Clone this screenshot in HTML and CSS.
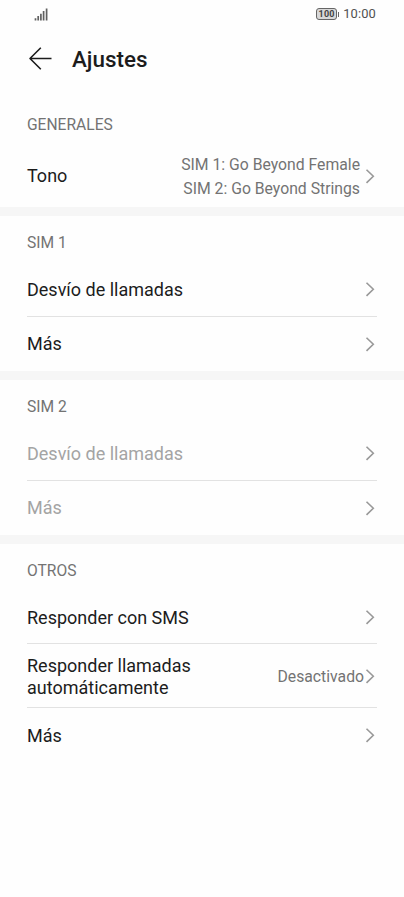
FILE: index.html
```html
<!DOCTYPE html>
<html lang="es">
<head>
<meta charset="utf-8">
<title>Ajustes</title>
<link rel="stylesheet" href="styles.css">
</head>
<body>
<div class="status">
  <svg class="signal" width="14" height="13" viewBox="0 0 14 13"><path d="M1.5 10.2V12.5M4.2 8V12.5M6.9 5.7V12.5M9.6 3V12.5M12.6 .5V12.5" stroke="#606060" stroke-width="1.7"/></svg>
  <div class="status-right"><span class="battery">100</span><span class="battery-tip"></span><span class="clock">10:00</span></div>
</div>
<header class="header">
  <svg width="24" height="24" viewBox="0 0 24 24" fill="none" stroke="#1c1c1c" stroke-width="1.6" stroke-linejoin="round"><path d="M23.5 11.5H2M12.8 .8L2 11.5L12.8 22.2"/></svg>
  <h1>Ajustes</h1>
</header>
<section class="group general">
  <h2>GENERALES</h2>
  <div class="row tone"><span class="label">Tono</span><span class="value">SIM 1: Go Beyond Female<br>SIM 2: Go Beyond Strings</span><svg class="chev" viewBox="0 0 10 16"><path d="M1.5 1.7L8.3 8.3L1.5 14.9"/></svg></div>
</section>
<section class="group">
  <h2>SIM 1</h2>
  <div class="row"><span class="label">Desvío de llamadas</span><svg class="chev" viewBox="0 0 10 16"><path d="M1.5 1.7L8.3 8.3L1.5 14.9"/></svg></div>
  <div class="row last"><span class="label">Más</span><svg class="chev" viewBox="0 0 10 16"><path d="M1.5 1.7L8.3 8.3L1.5 14.9"/></svg></div>
</section>
<section class="group disabled">
  <h2>SIM 2</h2>
  <div class="row"><span class="label">Desvío de llamadas</span><svg class="chev" viewBox="0 0 10 16"><path d="M1.5 1.7L8.3 8.3L1.5 14.9"/></svg></div>
  <div class="row last"><span class="label">Más</span><svg class="chev" viewBox="0 0 10 16"><path d="M1.5 1.7L8.3 8.3L1.5 14.9"/></svg></div>
</section>
<section class="group">
  <h2>OTROS</h2>
  <div class="row first"><span class="label">Responder con SMS</span><svg class="chev" viewBox="0 0 10 16"><path d="M1.5 1.7L8.3 8.3L1.5 14.9"/></svg></div>
  <div class="row tall"><span class="label">Responder llamadas<br>automáticamente</span><span class="value">Desactivado</span><svg class="chev" viewBox="0 0 10 16"><path d="M1.5 1.7L8.3 8.3L1.5 14.9"/></svg></div>
  <div class="row"><span class="label">Más</span><svg class="chev" viewBox="0 0 10 16"><path d="M1.5 1.7L8.3 8.3L1.5 14.9"/></svg></div>
</section>
</body>
</html>
```
FILE: styles.css
```css
* { box-sizing: border-box; }
body { margin: 0; background: #fefefe; color: #1c1c1c; font-family: Roboto, sans-serif; min-height: 897px; }
.status { height: 28px; padding: 0 28px 0 34px; display: flex; align-items: center; justify-content: space-between; }
.status-right { display: flex; align-items: center; }
.battery { width: 21px; height: 12px; border: 1px solid #666; border-radius: 3px; background: #d8d8d8; font-size: 9px; line-height: 10px; font-weight: 700; letter-spacing: .3px; text-align: center; color: #444; }
.battery-tip { width: 1px; height: 5px; margin: 0 4px 0 1px; background: #666; }
.clock { font-size: 12.9px; line-height: 16px; color: #505050; font-weight: 400; letter-spacing: .15px; }
.header { height: 62px; padding-left: 28px; display: flex; align-items: center; gap: 20px; }
h1 { margin: 0; padding-bottom: 1px; font-size: 22.4px; font-weight: 500; }
.group { height: 164px; padding: 0 27px; border-bottom: 9px solid #f6f6f6; }
.group:last-child { border: 0; height: 219px; }
h2 { margin: 0; height: 46px; padding-top: 18px; font-size: 15.6px; line-height: 19px; font-weight: 400; color: #737373; }
.general { height: 126px; }
.general h2 { height: 54px; padding-top: 26px; }
.row { height: 54px; display: flex; align-items: center; font-size: 18px; line-height: 22px; }
.row + .row { border-top: 1px solid #e2e2e2; height: 55px; }
.row.first { height: 53px; }
.label { flex: 1; padding-top: 1px; }
.last .label { padding: 0 0 1px; }
.first .label, .tall .label { padding-top: 2px; }
.value { font-size: 15.75px; line-height: 24px; color: #737373; text-align: right; }
.row.tone { height: 63px; }
.tone .value { margin-right: 5px; padding-top: 2px; }
.tall .value { margin-right: 1px; padding-top: 2px; }
.row + .row.tall { height: 64px; }
.chev { width: 10px; height: 16px; margin-right: 2px; fill: none; stroke: #999; stroke-width: 1.6; }
.disabled .label { color: #a4a4a4; }
```
